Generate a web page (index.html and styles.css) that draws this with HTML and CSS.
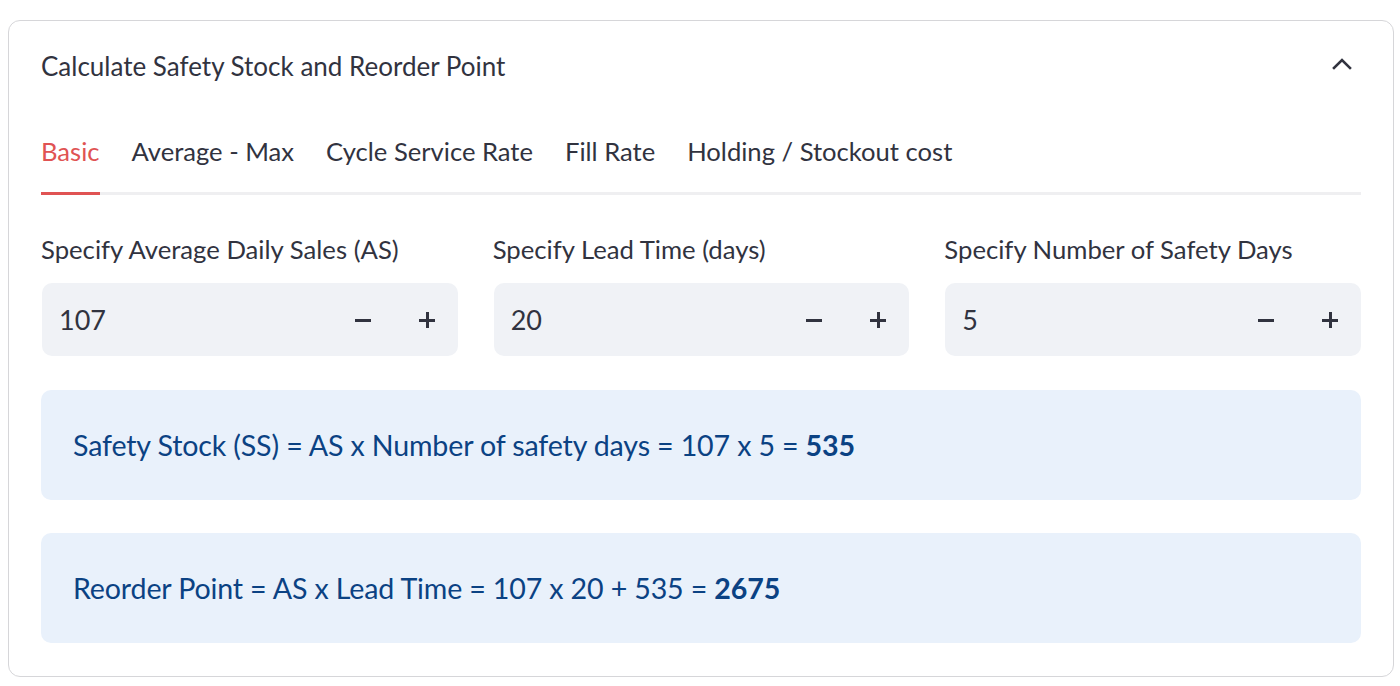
FILE: index.html
```html
<!DOCTYPE html>
<html>
<head>
<meta charset="utf-8">
<link rel="stylesheet" href="styles.css">
</head>
<body>
<div class="page">
  <div class="expander">
    <div class="exp-header">
      <span class="exp-title">Calculate Safety Stock and Reorder Point</span>
      <svg class="chev" width="22" height="14" viewBox="0 0 22 14"><path d="M3 11 L11 3 L19 11" fill="none" stroke="#31333f" stroke-width="2.6" stroke-linecap="square"/></svg>
    </div>
    <div class="exp-body">
      <div class="tabs">
        <div class="tab active">Basic</div>
        <div class="tab">Average - Max</div>
        <div class="tab">Cycle Service Rate</div>
        <div class="tab">Fill Rate</div>
        <div class="tab">Holding / Stockout cost</div>
      </div>
      <div class="inputs">
        <div class="field">
          <div class="label">Specify Average Daily Sales (AS)</div>
          <div class="numbox"><span class="val">107</span><span class="steps"><span class="step minus"></span><span class="step plus"></span></span></div>
        </div>
        <div class="field">
          <div class="label">Specify Lead Time (days)</div>
          <div class="numbox"><span class="val">20</span><span class="steps"><span class="step minus"></span><span class="step plus"></span></span></div>
        </div>
        <div class="field">
          <div class="label">Specify Number of Safety Days</div>
          <div class="numbox"><span class="val">5</span><span class="steps"><span class="step minus"></span><span class="step plus"></span></span></div>
        </div>
      </div>
      <div class="info"><span>Safety Stock (SS) = AS x Number of safety days = 107 x 5 = <b>535</b></span></div>
      <div class="info"><span>Reorder Point = AS x Lead Time = 107 x 20 + 535 = <b>2675</b></span></div>
    </div>
  </div>
</div>
</body>
</html>
```
FILE: styles.css
```css
html, body {
  margin: 0;
  padding: 0;
  background: #ffffff;
}
body {
  font-family: "Lato", "Source Sans Pro", sans-serif;
  color: #31333f;
}
.page {
  padding: 20px 6px 9px 8px;
}
.expander {
  border: 1.5px solid #d6d6d9;
  border-radius: 12px;
  height: 657px;
  box-sizing: border-box;
}
.exp-header {
  display: flex;
  align-items: center;
  justify-content: space-between;
  padding: 0 40px 0 32px;
  height: 90px;
}
.exp-title {
  font-size: 26px;
}
.chev {
  margin-top: -4px;
}
.exp-body {
  padding: 0 32px 0 32px;
}
.tabs {
  display: flex;
  gap: 32px;
  border-bottom: 3px solid #efeff1;
  height: 84px;
  box-sizing: border-box;
  align-items: flex-start;
  padding-top: 25px;
}
.tab {
  font-size: 25.6px;
  height: 56px;
  box-sizing: border-box;
}
.tab.active {
  color: #e05353;
  border-bottom: 3px solid #e05353;
  height: 59px;
}
.inputs {
  display: grid;
  grid-template-columns: 1fr 1fr 1fr;
  gap: 35px;
  margin-top: 39px;
}
.label {
  font-size: 25.7px;
  height: 36px;
  margin-bottom: 13px;
}
.numbox {
  background: #f0f2f6;
  border-radius: 10px;
  height: 73px;
  display: flex;
  align-items: center;
  justify-content: space-between;
  padding: 0 22px 0 17px;
  margin-left: 1px;
}
.val {
  font-size: 27px;
}
.steps {
  display: flex;
  gap: 46px;
  align-items: center;
}
.step {
  position: relative;
  width: 18px;
  height: 18px;
}
.step::before {
  content: "";
  position: absolute;
  left: 1px;
  right: 1px;
  top: 8px;
  height: 3px;
  background: #31333f;
}
.step.plus::after {
  content: "";
  position: absolute;
  top: 1px;
  bottom: 1px;
  left: 8px;
  width: 3px;
  background: #31333f;
}
.info {
  background: #e9f1fb;
  color: #0b4283;
  border-radius: 10px;
  height: 110px;
  display: flex;
  align-items: center;
  padding: 0 32px;
  font-size: 28.6px;
  letter-spacing: -0.15px;
  box-sizing: border-box;
  margin-top: 34px;
}
.info b {
  font-weight: 700;
}
.info + .info {
  margin-top: 33px;
}
```
